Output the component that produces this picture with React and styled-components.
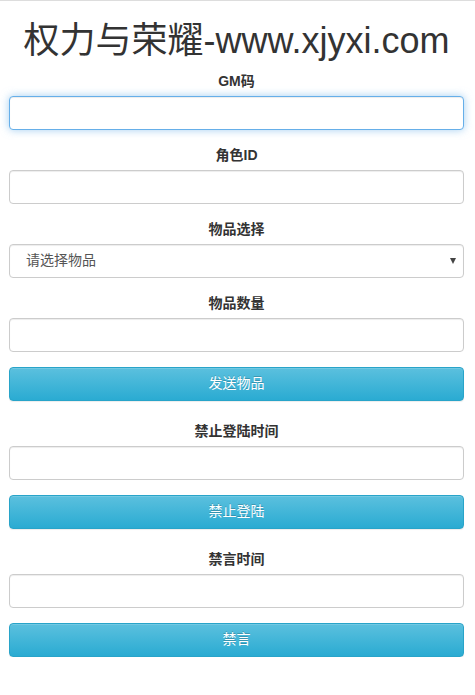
import React from "react";
import styled, { createGlobalStyle, css } from "styled-components";

const Global = createGlobalStyle`
  html, body { margin: 0; padding: 0; background: #fff; }
  body {
    font-family: "Liberation Sans", "Noto Sans CJK SC", Arial, sans-serif;
    font-size: 14px;
    line-height: 1.42857;
    color: #333;
    border-top: 1px solid #ddd;
  }
  * { box-sizing: border-box; }
`;

const Page = styled.div`
  padding: 0 11px 0 9px;
`;

const Title = styled.h1`
  margin: 20px 0 10px;
  font-size: 36px;
  font-weight: 400;
  line-height: 1.1;
  text-align: center;
  color: #333;
  font-family: "Liberation Sans", "Noto Sans CJK SC", Arial, sans-serif;
`;

const Form = styled.form`
  margin: 0 0 ${(p) => (p.$last ? 0 : 20)}px;
`;

const Group = styled.div`
  margin-bottom: 15px;
`;

const Label = styled.label`
  display: block;
  margin-bottom: 5px;
  font-weight: 700;
  text-align: center;
  line-height: 20px;
`;

const fieldBase = css`
  display: block;
  width: 100%;
  height: 34px;
  padding: 6px 12px;
  font-size: 14px;
  line-height: 1.42857;
  color: #555;
  background: #fff;
  border: 1px solid #ccc;
  border-radius: 4px;
  box-shadow: inset 0 1px 1px rgba(0, 0, 0, 0.075);
  font-family: "Liberation Sans", "Noto Sans CJK SC", Arial, sans-serif;
  outline: none;
`;

const Input = styled.input`
  ${fieldBase}
  ${(p) =>
    p.$focused &&
    css`
      border-color: #66afe9;
      box-shadow: inset 0 1px 1px rgba(0, 0, 0, 0.075), 0 0 8px rgba(102, 175, 233, 0.6);
    `}
`;

const SelectWrap = styled.div`
  position: relative;
  &::after {
    content: "";
    position: absolute;
    right: 8px;
    top: 14px;
    border-left: 3.5px solid transparent;
    border-right: 3.5px solid transparent;
    border-top: 6px solid #444;
    pointer-events: none;
  }
`;

const Select = styled.select`
  ${fieldBase}
  appearance: none;
  -webkit-appearance: none;
  padding-left: 16px;
`;

const Button = styled.button`
  display: block;
  width: 100%;
  height: 34px;
  padding: 6px 12px;
  font-size: 14px;
  line-height: 1.42857;
  color: #fff;
  border: 1px solid #28a4c9;
  border-radius: 4px;
  background-image: linear-gradient(to bottom, #5bc0de 0, #2aabd2 100%);
  text-shadow: 0 -1px 0 rgba(0, 0, 0, 0.2);
  box-shadow: inset 0 1px 0 rgba(255, 255, 255, 0.15), 0 1px 1px rgba(0, 0, 0, 0.075);
  font-family: "Liberation Sans", "Noto Sans CJK SC", Arial, sans-serif;
  cursor: pointer;
`;

function Field({ label, focused }) {
  return (
    <Group>
      <Label>{label}</Label>
      <Input type="text" $focused={focused} />
    </Group>
  );
}

export default function App() {
  return (
    <>
      <Global />
      <Page>
        <Title>权力与荣耀-www.xjyxi.com</Title>
        <Form onSubmit={(e) => e.preventDefault()}>
          <Field label="GM码" focused />
          <Field label="角色ID" />
          <Group>
            <Label>物品选择</Label>
            <SelectWrap>
              <Select defaultValue="">
                <option value="">请选择物品</option>
              </Select>
            </SelectWrap>
          </Group>
          <Field label="物品数量" />
          <Button type="button">发送物品</Button>
        </Form>
        <Form onSubmit={(e) => e.preventDefault()}>
          <Field label="禁止登陆时间" />
          <Button type="button">禁止登陆</Button>
        </Form>
        <Form $last onSubmit={(e) => e.preventDefault()}>
          <Field label="禁言时间" />
          <Button type="button">禁言</Button>
        </Form>
      </Page>
    </>
  );
}
